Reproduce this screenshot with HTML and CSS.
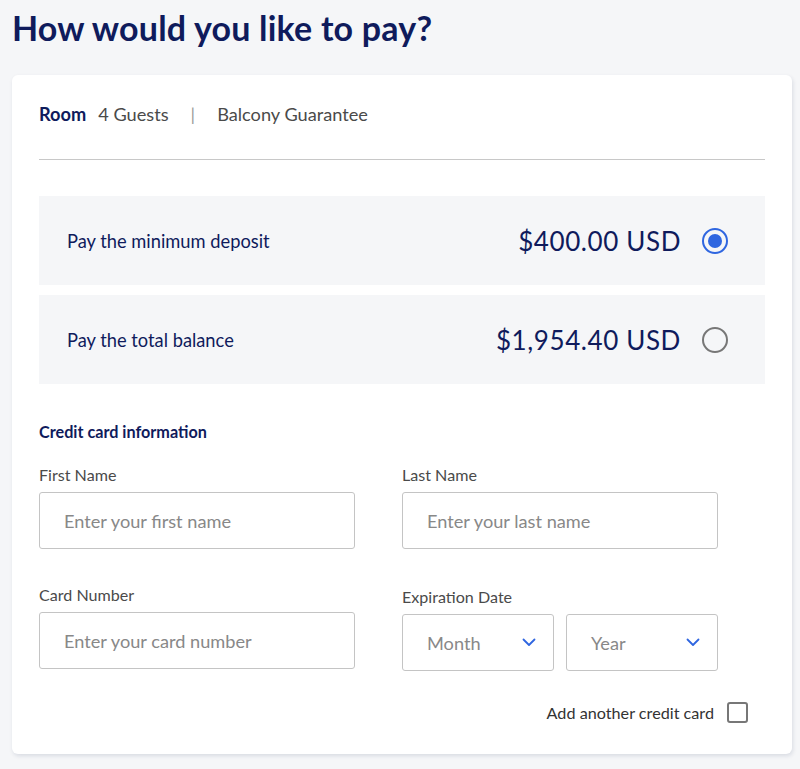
FILE: index.html
```html
<!DOCTYPE html>
<html lang="en">
<head>
<meta charset="utf-8">
<title>How would you like to pay?</title>
<link rel="stylesheet" href="styles.css">
</head>
<body>
<main class="page">
  <h1 class="title">How would you like to pay?</h1>
  <section class="card">
    <div class="summary">
      <span class="summary-room">Room</span>
      <span class="summary-item">4 Guests</span>
      <span class="summary-sep">|</span>
      <span class="summary-item">Balcony Guarantee</span>
    </div>
    <hr class="divider">
    <div class="options">
      <label class="option">
        <span class="option-label">Pay the minimum deposit</span>
        <span class="option-price">$400.00 USD</span>
        <span class="radio radio-on"></span>
      </label>
      <label class="option">
        <span class="option-label">Pay the total balance</span>
        <span class="option-price">$1,954.40 USD</span>
        <span class="radio"></span>
      </label>
    </div>
    <h2 class="section-title">Credit card information</h2>
    <div class="form-grid">
      <div class="field">
        <div class="field-label">First Name</div>
        <div class="input">Enter your first name</div>
      </div>
      <div class="field">
        <div class="field-label">Last Name</div>
        <div class="input">Enter your last name</div>
      </div>
      <div class="field">
        <div class="field-label">Card Number</div>
        <div class="input">Enter your card number</div>
      </div>
      <div class="field field-exp">
        <div class="field-label">Expiration Date</div>
        <div class="selects">
          <div class="select">Month
            <svg class="chev" width="14" height="9" viewBox="0 0 14 9"><path d="M1.5 1.5 L7 7 L12.5 1.5" fill="none" stroke="#2f66e0" stroke-width="1.8" stroke-linecap="round" stroke-linejoin="round"/></svg>
          </div>
          <div class="select">Year
            <svg class="chev" width="14" height="9" viewBox="0 0 14 9"><path d="M1.5 1.5 L7 7 L12.5 1.5" fill="none" stroke="#2f66e0" stroke-width="1.8" stroke-linecap="round" stroke-linejoin="round"/></svg>
          </div>
        </div>
      </div>
    </div>
    <div class="add-card">
      <span>Add another credit card</span>
      <span class="checkbox"></span>
    </div>
  </section>
</main>
</body>
</html>
```

FILE: styles.css
```css
* { box-sizing: border-box; }
html, body { margin: 0; padding: 0; }
body {
  background: #f5f6f8;
  font-family: "Lato", "Liberation Sans", sans-serif;
  color: #0f1b5c;
}
.page {
  padding: 8px 8px 14px 12px;
}
.title {
  margin: 0;
  font-size: 34px;
  line-height: 40px;
  font-weight: 700;
  color: #0f1b5c;
  letter-spacing: 0.2px;
}
.card {
  margin-top: 27px;
  background: #fff;
  border-radius: 6px;
  box-shadow: 1px 2px 4px rgba(20, 30, 70, 0.12);
  padding: 28px 27px 31px 27px;
}
.summary {
  display: flex;
  align-items: center;
  font-size: 18.2px;
  line-height: 22px;
  color: #4a4a4a;
}
.summary-room {
  font-weight: 700;
  color: #0f1b5c;
  margin-right: 12px;
}
.summary-sep {
  margin: 0 22px;
  color: #9a9a9a;
}
.divider {
  border: 0;
  border-top: 1px solid #c8c8c8;
  margin: 34px 0 36px;
}
.options {
  display: flex;
  flex-direction: column;
  gap: 10px;
}
.option {
  display: flex;
  align-items: center;
  background: #f5f6f8;
  height: 89px;
  padding: 0 37px 0 28px;
}
.option-label {
  flex: 1;
  font-size: 18.3px;
  color: #0f1b5c;
}
.option-price {
  font-size: 26px;
  letter-spacing: 0.6px;
  color: #0f1b5c;
  margin-right: 21px;
}
.radio {
  width: 26px;
  height: 26px;
  border-radius: 50%;
  border: 2px solid #777;
  display: flex;
  align-items: center;
  justify-content: center;
}
.radio-on {
  border-color: #2f66e0;
}
.radio-on::after {
  content: "";
  width: 14px;
  height: 14px;
  border-radius: 50%;
  background: #2f66e0;
}
.section-title {
  margin: 38px 0 0;
  font-size: 16.2px;
  line-height: 20px;
  font-weight: 700;
  color: #0f1b5c;
}
.form-grid {
  display: grid;
  grid-template-columns: 316px 316px;
  column-gap: 47px;
  row-gap: 37px;
  margin-top: 24px;
}
.field-label {
  font-size: 16.1px;
  line-height: 18px;
  color: #4a4a4a;
  margin-bottom: 8px;
}
.field-exp .field-label {
  margin-top: 2px;
}
.input, .select {
  height: 57px;
  border: 1px solid #c4c4c4;
  border-radius: 3px;
  background: #fff;
  display: flex;
  align-items: center;
  padding-left: 24px;
  font-size: 18.2px;
  color: #888;
}
.selects {
  display: flex;
  gap: 12px;
}
.select {
  width: 152px;
  justify-content: space-between;
  padding-right: 17px;
}
.add-card {
  display: flex;
  justify-content: flex-end;
  align-items: center;
  margin-top: 31px;
  margin-right: 17px;
  font-size: 16.2px;
  color: #333;
}
.checkbox {
  width: 21px;
  height: 21px;
  border: 2px solid #777;
  border-radius: 3px;
  margin-left: 13px;
}
```
